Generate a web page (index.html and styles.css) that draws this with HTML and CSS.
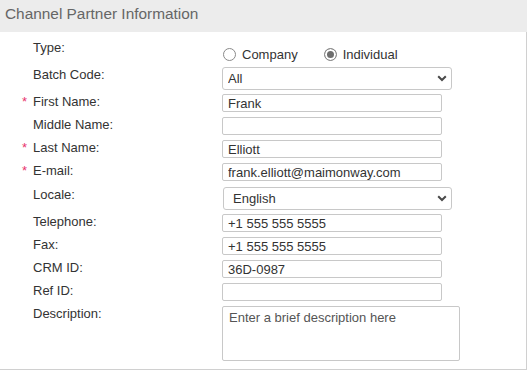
FILE: index.html
```html
<!DOCTYPE html>
<html lang="en">
<head>
  <meta charset="UTF-8">
  <title>Channel Partner Information</title>
  <link rel="stylesheet" href="styles.css">
</head>
<body>

<div class="panel">
  <div class="panel-header">Channel Partner Information</div>

  <div class="panel-body">
    <div class="row row-type">
      <span class="req"></span>
      <label class="label">Type:</label>
      <div class="radios">
        <label class="radio"><input type="radio" name="type"> Company</label>
        <label class="radio"><input type="radio" name="type" checked> Individual</label>
      </div>
    </div>

    <div class="row row-select">
      <span class="req"></span>
      <label class="label">Batch Code:</label>
      <div class="select-wrap">
        <select class="select">
          <option>All</option>
        </select>
        <svg class="chevron" width="10" height="7" viewBox="0 0 10 7"><polyline points="1.2,1.2 5,5 8.8,1.2" fill="none" stroke="#4a4a4a" stroke-width="2"/></svg>
      </div>
    </div>

    <div class="row">
      <span class="req">*</span>
      <label class="label">First Name:</label>
      <input class="text" type="text" value="Frank">
    </div>

    <div class="row">
      <span class="req"></span>
      <label class="label">Middle Name:</label>
      <input class="text" type="text" value="">
    </div>

    <div class="row">
      <span class="req">*</span>
      <label class="label">Last Name:</label>
      <input class="text" type="text" value="Elliott">
    </div>

    <div class="row row-email">
      <span class="req">*</span>
      <label class="label">E-mail:</label>
      <input class="text" type="text" value="frank.elliott@maimonway.com">
    </div>

    <div class="row row-select">
      <span class="req"></span>
      <label class="label">Locale:</label>
      <div class="select-wrap select-wrap-locale">
        <select class="select select-locale">
          <option>English</option>
        </select>
        <svg class="chevron" width="10" height="7" viewBox="0 0 10 7"><polyline points="1.2,1.2 5,5 8.8,1.2" fill="none" stroke="#4a4a4a" stroke-width="2"/></svg>
      </div>
    </div>

    <div class="row">
      <span class="req"></span>
      <label class="label">Telephone:</label>
      <input class="text" type="text" value="+1 555 555 5555">
    </div>

    <div class="row">
      <span class="req"></span>
      <label class="label">Fax:</label>
      <input class="text" type="text" value="+1 555 555 5555">
    </div>

    <div class="row">
      <span class="req"></span>
      <label class="label">CRM ID:</label>
      <input class="text" type="text" value="36D-0987">
    </div>

    <div class="row">
      <span class="req"></span>
      <label class="label">Ref ID:</label>
      <input class="text" type="text" value="">
    </div>

    <div class="row row-last">
      <span class="req"></span>
      <label class="label">Description:</label>
      <textarea class="textarea" placeholder="Enter a brief description here"></textarea>
    </div>
  </div>
</div>

</body>
</html>
```

FILE: styles.css
```css
body {
  margin: 0;
  font-family: "Liberation Sans", Arial, sans-serif;
  font-size: 13px;
  color: #333;
  background: #fff;
}

.panel {
  width: 527px;
}

.panel-header {
  box-sizing: border-box;
  height: 32px;
  padding: 5px 5px 0;
  background: #ececec;
  color: #666;
  font-size: 15.4px;
  line-height: 17px;
}

.panel-body {
  padding: 8px 0 8px 22px;
  border-right: 1px solid #d0d0d0;
  border-bottom: 1px solid #d0d0d0;
}

.row {
  display: flex;
  align-items: flex-start;
  margin-bottom: 5px;
  line-height: 15px;
}

.row-select {
  margin-bottom: 4px;
}

.row-email {
  margin-bottom: 6px;
}

.row-last {
  margin-bottom: 0;
}

.req {
  width: 11px;
  flex: none;
  color: #e8336d;
}

.label {
  width: 189px;
  flex: none;
}

.radios {
  display: flex;
  align-items: center;
  margin-top: 7px;
}

.radio {
  display: flex;
  align-items: center;
  gap: 6px;
  margin-right: 25px;
}

.radio input {
  appearance: none;
  box-sizing: border-box;
  width: 13px;
  height: 13px;
  margin: 0 0 0 1px;
  border: 1px solid #8a8a8a;
  border-radius: 50%;
  background: #fff;
}

.radio input:checked {
  background: #6e6e6e;
  box-shadow: inset 0 0 0 2px #fff;
}

.select-wrap {
  position: relative;
}

.select-wrap-locale {
  margin-left: 1px;
}

.select {
  appearance: none;
  box-sizing: border-box;
  width: 230px;
  height: 23px;
  margin: 0;
  padding: 0 20px 0 5px;
  border: 1px solid #c8c8c8;
  border-radius: 3px;
  background: #fff;
  font-family: inherit;
  font-size: 13px;
  color: #333;
}

.select-locale {
  width: 229px;
  padding-left: 9px;
}

.chevron {
  position: absolute;
  right: 5px;
  top: 8px;
  pointer-events: none;
}

.text {
  box-sizing: border-box;
  width: 220px;
  height: 18px;
  margin: 0;
  padding: 0 5px;
  border: 1px solid #c8c8c8;
  border-radius: 2px;
  font-family: inherit;
  font-size: 13px;
  color: #333;
  outline: none;
}

.textarea {
  box-sizing: border-box;
  width: 238px;
  height: 55px;
  margin: 0;
  padding: 3px 6px;
  border: 1px solid #c8c8c8;
  border-radius: 2px;
  font-family: inherit;
  font-size: 13px;
  line-height: 15px;
  resize: none;
}

.textarea::placeholder {
  color: #555;
  opacity: 1;
}
```
